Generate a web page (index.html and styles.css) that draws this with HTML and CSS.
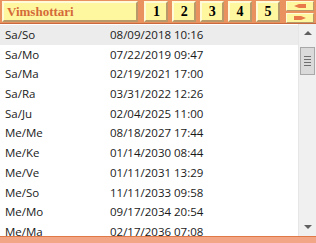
FILE: index.html
```html
<!DOCTYPE html>
<html lang="en">
<head>
  <meta charset="UTF-8">
  <title>Vimshottari</title>
  <link rel="stylesheet" href="styles.css">
</head>
<body>
  <div class="toolbar">
    <div class="title-box">Vimshottari</div>
    <div class="level-btn">1</div>
    <div class="level-btn">2</div>
    <div class="level-btn">3</div>
    <div class="level-btn">4</div>
    <div class="level-btn">5</div>
    <div class="arrows">
      <div class="arrow-btn">
        <svg width="24" height="6" viewBox="0 0 24 6"><path d="M6 3 L11 1 L18 1 L18 5 L11 5 Z" fill="#e8784a"/></svg>
      </div>
      <div class="arrow-btn">
        <svg width="24" height="6" viewBox="0 0 24 6"><path d="M6 1 L13 1 L18 3 L13 5 L6 5 Z" fill="#e8784a"/></svg>
      </div>
    </div>
  </div>

  <div class="list-wrap">
    <div class="list">
      <div class="row selected"><span class="name">Sa/So</span><span class="date">08/09/2018</span><span class="time">10:16</span></div>
      <div class="row"><span class="name">Sa/Mo</span><span class="date">07/22/2019</span><span class="time">09:47</span></div>
      <div class="row"><span class="name">Sa/Ma</span><span class="date">02/19/2021</span><span class="time">17:00</span></div>
      <div class="row"><span class="name">Sa/Ra</span><span class="date">03/31/2022</span><span class="time">12:26</span></div>
      <div class="row"><span class="name">Sa/Ju</span><span class="date">02/04/2025</span><span class="time">11:00</span></div>
      <div class="row"><span class="name">Me/Me</span><span class="date">08/18/2027</span><span class="time">17:44</span></div>
      <div class="row"><span class="name">Me/Ke</span><span class="date">01/14/2030</span><span class="time">08:44</span></div>
      <div class="row"><span class="name">Me/Ve</span><span class="date">01/11/2031</span><span class="time">13:29</span></div>
      <div class="row"><span class="name">Me/So</span><span class="date">11/11/2033</span><span class="time">09:58</span></div>
      <div class="row"><span class="name">Me/Mo</span><span class="date">09/17/2034</span><span class="time">20:54</span></div>
      <div class="row"><span class="name">Me/Ma</span><span class="date">02/17/2036</span><span class="time">07:08</span></div>
    </div>
    <div class="scrollbar">
      <div class="sb-arrow up"></div>
      <div class="sb-track">
        <div class="sb-thumb">
          <span></span><span></span><span></span><span></span>
        </div>
      </div>
      <div class="sb-arrow down"></div>
    </div>
  </div>

  <div class="footer"></div>
</body>
</html>
```

FILE: styles.css
```css
body {
  margin: 0;
  width: 316px;
  height: 243px;
  overflow: hidden;
  background: #ffffff;
  font-family: "Open Sans", "Noto Sans", sans-serif;
}
.toolbar {
  display: flex;
  align-items: center;
  height: 24px;
  padding: 0 2px;
  box-sizing: border-box;
  background: #e9915f;
  border-bottom: 1px solid #c86a3d;
}
.title-box {
  width: 130px;
  height: 17px;
  line-height: 17px;
  margin-right: 6px;
  padding-left: 3px;
  background: #fff6a0;
  border-top: 2px solid #fffbd8;
  border-left: 2px solid #fffbd8;
  border-right: 2px solid #b89a6a;
  border-bottom: 2px solid #b89a6a;
  font-family: "Liberation Serif", serif;
  font-weight: bold;
  font-size: 13px;
  color: #d46a38;
}
.level-btn {
  width: 20px;
  height: 17px;
  line-height: 17px;
  margin-right: 4px;
  text-align: center;
  background: #fff6a0;
  border-top: 2px solid #fffbd8;
  border-left: 2px solid #fffbd8;
  border-right: 2px solid #b89a6a;
  border-bottom: 2px solid #b89a6a;
  font-family: "Liberation Serif", serif;
  font-weight: bold;
  font-size: 14px;
  color: #000;
}
.arrows {
  display: flex;
  flex-direction: column;
  gap: 2px;
  margin-left: 2px;
}
.arrow-btn {
  width: 26px;
  height: 8px;
  background: #fff6a0;
  border-top: 1px solid #fffbd8;
  border-left: 1px solid #fffbd8;
  border-right: 1px solid #b89a6a;
  border-bottom: 1px solid #b89a6a;
  display: flex;
  align-items: center;
  justify-content: center;
}
.list-wrap {
  display: flex;
  height: 212px;
  overflow: hidden;
}
.list {
  flex: 1;
  padding-top: 1px;
}
.row {
  display: flex;
  height: 19.7px;
  line-height: 19.7px;
  font-size: 11.5px;
  color: #1a1a1a;
}
.row.selected {
  background: #ececec;
}
.name {
  width: 105px;
  padding-left: 5px;
}
.date {
  width: 64px;
}
.scrollbar {
  width: 17px;
  background: #f0f0f0;
  border-left: 1px solid #e6e6e6;
  display: flex;
  flex-direction: column;
}
.sb-arrow {
  height: 17px;
  position: relative;
}
.sb-arrow::after {
  content: "";
  position: absolute;
  left: 5px;
  border-left: 4px solid transparent;
  border-right: 4px solid transparent;
}
.sb-arrow.up::after {
  top: 7px;
  border-bottom: 4px solid #606060;
}
.sb-arrow.down::after {
  top: 6px;
  border-top: 4px solid #606060;
}
.sb-track {
  flex: 1;
  padding: 6px 1px 0 1px;
}
.sb-thumb {
  height: 28px;
  background: #dadada;
  border: 1px solid #a8a8a8;
  box-sizing: border-box;
  display: flex;
  flex-direction: column;
  align-items: center;
  justify-content: center;
  gap: 2px;
}
.sb-thumb span {
  display: block;
  width: 7px;
  height: 1px;
  background: #6e6e6e;
}
.footer {
  height: 7px;
  background: #f2a686;
  border-top: 1px solid #e07848;
}
```
